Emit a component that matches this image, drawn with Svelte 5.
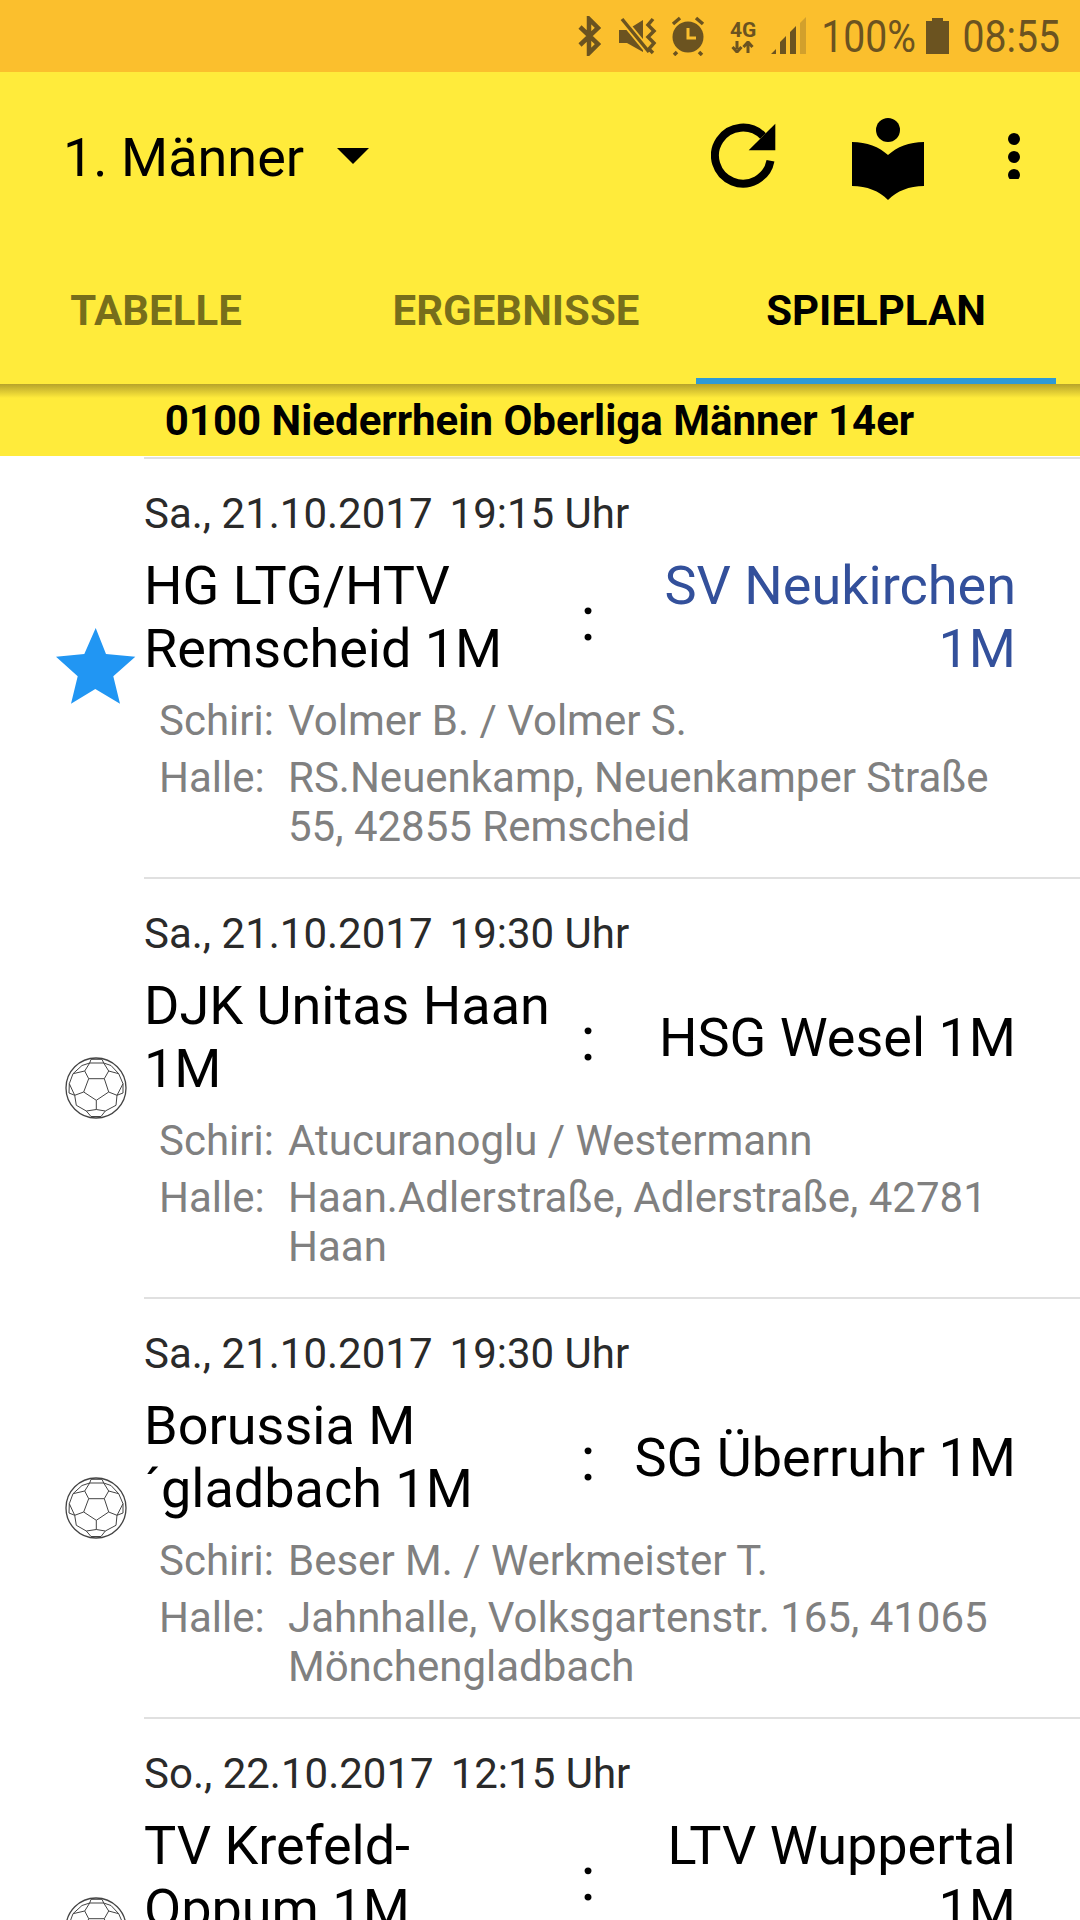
<script>
  const matches = [
    { date: "Sa., 21.10.2017", time: "19:15 Uhr", home: "HG LTG/HTV Remscheid 1M", away: "SV Neukirchen 1M", fav: true, schiri: "Volmer B. / Volmer S.", halle: "RS.Neuenkamp, Neuenkamper Straße 55, 42855 Remscheid" },
    { date: "Sa., 21.10.2017", time: "19:30 Uhr", home: "DJK Unitas Haan 1M", away: "HSG Wesel 1M", schiri: "Atucuranoglu / Westermann", halle: "Haan.Adlerstraße, Adlerstraße, 42781 Haan" },
    { date: "Sa., 21.10.2017", time: "19:30 Uhr", home: "Borussia M ´gladbach 1M", away: "SG Überruhr 1M", schiri: "Beser M. / Werkmeister T.", halle: "Jahnhalle, Volksgartenstr. 165, 41065 Mönchengladbach" },
    { date: "So., 22.10.2017", time: "12:15 Uhr", home: "TV Krefeld-Oppum 1M", away: "LTV Wuppertal 1M", schiri: "", halle: "" }
  ];
  const tabs = ["TABELLE", "ERGEBNISSE", "SPIELPLAN"];
</script>

<div class="screen">
  <div class="status">
    <svg class="bt" viewBox="0 0 24 40" width="24" height="40"><path d="M2 11 20 28 11 37V3l9 9L2 29" fill="none" stroke="#6b5320" stroke-width="4.500"/></svg>
    <svg class="mute" viewBox="0 0 40 40" width="40" height="40">
      <path d="M0 14h8L24 4v32L8 27H0z" fill="#6b5320"/>
      <path d="M3 3 30 36" stroke="#fbbf2d" stroke-width="7"/>
      <path d="M3 3 30 36" stroke="#6b5320" stroke-width="3.500"/>
      <path d="M34 3l-5 6 6 6-6 6 6 6-5 6 4 4" fill="none" stroke="#6b5320" stroke-width="3.500"/>
    </svg>
    <svg class="alarm" viewBox="0 0 36 40" width="36" height="40">
      <circle cx="18" cy="21" r="15.500" fill="#6b5320"/>
      <path d="M3 8l7-6M33 8l-7-6M7 36l-3 3M29 36l3 3" stroke="#6b5320" stroke-width="3.500"/>
      <path d="M18 12v10h8" fill="none" stroke="#fbbf2d" stroke-width="3"/>
    </svg>
    <div class="net">
      <span>4G</span>
      <svg viewBox="0 0 24 12" width="24" height="12"><path d="M6 0v8M1.500 6 6 11l4.500-5M17 12V4M12.500 6 17 1l4.500 5" fill="none" stroke="#6b5320" stroke-width="3"/></svg>
    </div>
    <svg class="signal" viewBox="0 0 36 38" width="36" height="38">
      <path d="M0 37l5-5v5zM9 37V25l6-6v18zM19 37V15l6-6v28z" fill="#6b5320"/>
      <path d="M29 37V6l6-6v37z" fill="#d2a02c"/>
    </svg>
    <span class="pct">100%</span>
    <svg class="batt" viewBox="0 0 23 36" width="23" height="36"><path d="M6 0h11v3h6v33H0V3h6z" fill="#6b5320"/></svg>
    <span class="clock">08:55</span>
  </div>

  <header class="toolbar">
    <div class="bar-row">
      <div class="title">1. Männer</div>
      <svg class="caret" viewBox="0 0 32 16" width="32" height="16"><path d="M0 0h32L16 16z"/></svg>
      <svg class="refresh" viewBox="0 0 66 66" width="66" height="66">
        <path d="M59.500 37.700A28 28 0 1 1 52 13" fill="none" stroke="#000" stroke-width="8"/>
        <path d="M64.300.7v26.600H37.700z"/>
      </svg>
      <svg class="reader" viewBox="0 0 74 82" width="74" height="82">
        <circle cx="37" cy="12" r="12"/>
        <path d="M1 24c15 0 27 5 36 13 9-8 21-13 36-13v44c-15 0-27 5-36 14-9-9-21-14-36-14z"/>
      </svg>
      <svg class="more" viewBox="0 0 12 46" width="12" height="46"><circle cx="6" cy="6" r="6"/><circle cx="6" cy="24" r="6"/><circle cx="6" cy="42" r="6"/></svg>
    </div>
    <nav class="tabs">
      {#each tabs as tab, i}
        <div class="tab" class:active={i === 2}>{tab}</div>
      {/each}
    </nav>
  </header>

  <div class="league">0100 Niederrhein Oberliga Männer 14er</div>

  <main class="list">
    {#each matches as m}
      <article class="match">
        <div class="icon-col">
          {#if m.fav}
            <svg class="star" viewBox="0 0 80 76" width="80" height="76"><path d="M39.700 0 50 26 79.300 28.700 57.300 48.300 64 75.700 39.300 61 15 75.700 21.700 48.300 0 28.700 28.300 26z" fill="#2196f3"/></svg>
          {:else}
            <svg class="ball" viewBox="0 0 62 62" width="62" height="62" fill="none" stroke="#444" stroke-width="1">
              <circle cx="31" cy="31" r="30" stroke-width="1.300"/>
              <path d="M23.700 21.700H39.300L43.700 35 31.300 43.300 18.700 35z"/>
              <path d="M23.700 21.700 19.700 14 24.700 6H38.700L43.700 14 39.300 21.700"/>
              <path d="M24.700 6 26 2.300H37L38.700 6"/>
              <path d="M19.700 14 8 16.700 4.300 26.700 9.700 38.300 18.700 35"/>
              <path d="M43.700 14 53.700 16.700 58 26.700 52 38.300 43.700 35"/>
              <path d="M9.700 38.300 11.300 48.300 21.300 54 31.300 52.500 40.300 54 51 48.300 52 38.300"/>
              <path d="M31.300 43.300V52.500"/>
              <path d="M24.700 6 17 8.500 8 16.700M38.700 6 46 8.500 53.700 16.700"/>
              <path d="M4.300 26.700 4 36 9.700 38.300M58 26.700 58 36 52 38.300"/>
              <path d="M21.300 54 26 59.500H36L40.300 54"/>
            </svg>
          {/if}
        </div>
        <div class="body">
          <div class="when"><span>{m.date}</span><span>{m.time}</span></div>
          <div class="teams">
            <div class="home">{m.home}</div>
            <div class="colon">:</div>
            <div class="away" class:fav={m.fav}>{m.away}</div>
          </div>
          {#if m.schiri}
            <div class="info">
              <span>Schiri:</span><span>{m.schiri}</span>
              <span>Halle:</span><span>{m.halle}</span>
            </div>
          {/if}
        </div>
      </article>
    {/each}
  </main>
</div>

<style>
  :global(body) {
    margin: 0;
    background: #fff;
  }

  .screen {
    width: 1080px;
    height: 1920px;
    overflow: hidden;
    font-family: Roboto, sans-serif;
  }

  .status {
    height: 72px;
    background: #fbbf2d;
    display: flex;
    align-items: center;
    justify-content: flex-end;
    padding-right: 20px;
    box-sizing: border-box;
    color: #6b5320;
    font-size: 45px;
  }

  .bt { margin-right: 17px; }
  .mute { margin-right: 11px; }
  .alarm { margin-right: 23px; }
  .net {
    width: 28px;
    display: flex;
    flex-direction: column;
    align-items: center;
    font-size: 21px;
    font-weight: 700;
    line-height: 21px;
    margin-right: 14px;
  }
  .signal { margin-right: 0; }
  .pct,
  .clock {
    transform: scaleX(0.87);
    transform-origin: right;
  }
  .pct { margin-right: 10px; }
  .batt { margin-right: -1px; }

  .toolbar {
    background: #ffeb3b;
    height: 312px;
    display: flex;
    flex-direction: column;
  }

  .bar-row {
    display: flex;
    align-items: center;
    height: 170px;
    padding: 0 60px 0 63px;
  }

  .title {
    font-size: 54px;
    color: #000;
  }

  .caret { margin-left: 33px; margin-right: auto; margin-top: -2px; }
  .refresh { margin-right: 74px; margin-top: -2px; }
  .reader { margin-right: 83px; margin-top: 4px; }
  .more { margin-top: -2px; }

  .tabs {
    display: grid;
    grid-template-columns: repeat(3, 360px);
    margin-left: -24px;
    flex: 1;
  }

  .tab {
    font-size: 42px;
    font-weight: 700;
    color: rgba(0, 0, 0, 0.54);
    display: flex;
    align-items: center;
    justify-content: center;
    padding-bottom: 6px;
    box-sizing: border-box;
  }

  .tab.active {
    color: #000;
    border-bottom: 6px solid #2e9ad6;
    padding-bottom: 0;
  }

  .league {
    height: 72px;
    background: #ffeb3b linear-gradient(#b7a32a, #ffeb3b 14px);
    font-size: 42px;
    font-weight: 700;
    color: #000;
    text-align: center;
    line-height: 73px;
    padding-right: 1px;
  }

  .list {
    padding-top: 1px;
  }

  .match {
    display: flex;
    height: 420px;
  }

  .icon-col {
    width: 144px;
    flex: none;
    display: flex;
    align-items: center;
    justify-content: center;
    padding-left: 48px;
    box-sizing: border-box;
  }

  .star {
    margin-top: -3px;
  }

  .ball {
    margin-top: 2px;
  }

  .body {
    flex: 1;
    border-top: 2px solid #e0e0e0;
    padding: 32px 64px 0 0;
    min-width: 0;
  }

  .when {
    font-size: 42px;
    line-height: 45px;
    color: #2a2a2a;
    display: flex;
    gap: 17px;
  }

  .teams {
    display: grid;
    grid-template-columns: 420px 48px 1fr;
    margin-top: 18px;
    font-size: 54px;
    line-height: 63px;
    color: #000;
    align-items: center;
  }

  .away {
    text-align: right;
  }

  .away.fav {
    color: #33509b;
  }

  .colon {
    text-align: center;
    font-size: 62px;
    position: relative;
    top: 1px;
  }

  .info {
    display: grid;
    grid-template-columns: 129px 1fr;
    margin: 16px 0 0 15px;
    font-size: 42px;
    line-height: 49px;
    color: #808080;
    row-gap: 8px;
  }
</style>
